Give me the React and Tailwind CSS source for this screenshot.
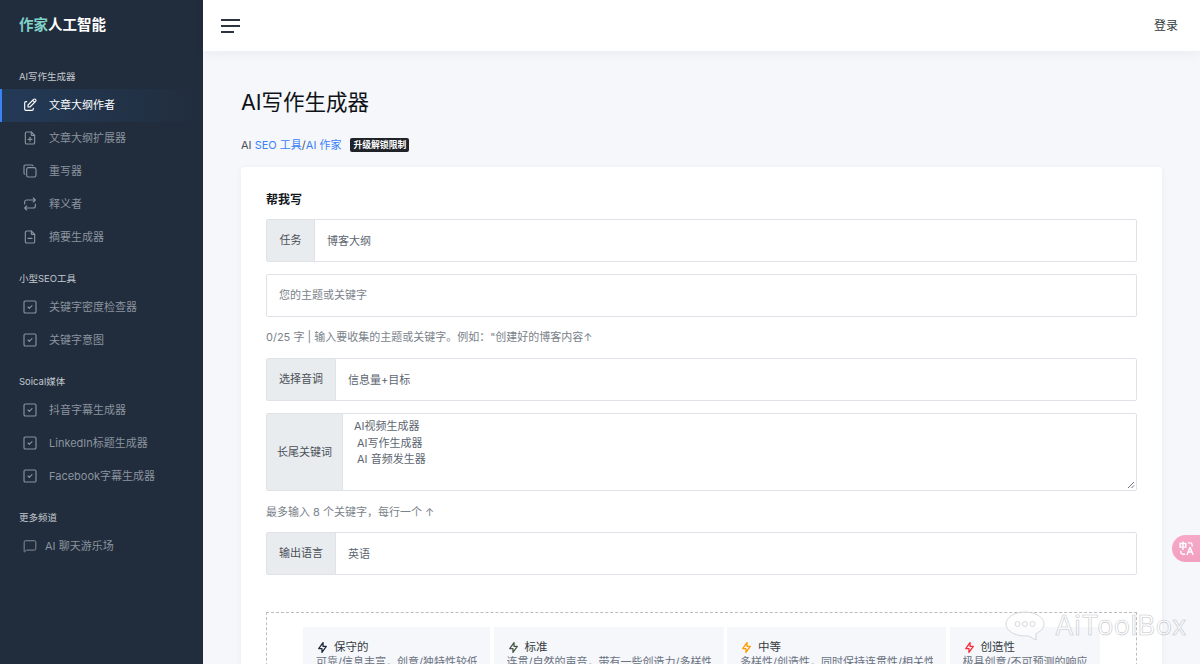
import { TbEdit, TbFilePlus, TbCopy, TbRepeat, TbFileMinus, TbSquareCheck, TbBolt } from "react-icons/tb";
import { MessageSquare } from "lucide-react";
import { RiTranslate } from "react-icons/ri";

const groups = [
  {
    title: "AI写作生成器",
    items: [
      { label: "文章大纲作者", icon: TbEdit, active: true },
      { label: "文章大纲扩展器", icon: TbFilePlus },
      { label: "重写器", icon: TbCopy },
      { label: "释义者", icon: TbRepeat },
      { label: "摘要生成器", icon: TbFileMinus },
    ],
  },
  {
    title: "小型SEO工具",
    items: [
      { label: "关键字密度检查器", icon: TbSquareCheck },
      { label: "关键字意图", icon: TbSquareCheck },
    ],
  },
  {
    title: "Soical媒体",
    items: [
      { label: "抖音字幕生成器", icon: TbSquareCheck },
      { label: "LinkedIn标题生成器", icon: TbSquareCheck },
      { label: "Facebook字幕生成器", icon: TbSquareCheck },
    ],
  },
];

const tones = [
  { name: "保守的", desc: "可靠/信息丰富，创意/独特性较低", color: "text-gray-800", w: "w-[187px]" },
  { name: "标准", desc: "连贯/自然的声音，带有一些创造力/多样性", color: "text-[#4b5a45]", w: "w-[230px]" },
  { name: "中等", desc: "多样性/创造性，同时保持连贯性/相关性", color: "text-amber-500", w: "w-[219px]" },
  { name: "创造性", desc: "极具创意/不可预测的响应", color: "text-red-500", w: "w-[150px]" },
];

function Field({ label, value, labelW = "w-[48px]" }) {
  return (
    <div className="flex h-[43px] border border-[#dfe3e8] rounded-[2px] bg-white">
      <div className={`${labelW} shrink-0 flex items-center justify-center bg-[#e9ecef] border-r border-[#dfe3e8] text-[#495057]`}>
        {label}
      </div>
      <div className="flex-1 flex items-center pl-[12px] pt-[1px] text-[#5c6670]">{value}</div>
    </div>
  );
}

export default function App() {
  return (
    <div
      className="flex h-screen overflow-hidden relative bg-[#f5f7fb] text-[11px]"
      style={{ fontFamily: 'Inter, "Noto Sans CJK SC", sans-serif' }}
    >
      {/* Sidebar */}
      <aside className="w-[203px] shrink-0 bg-[#212d3d] text-[#8b939d] pt-[15px]">
        <div className="pl-[19px] text-[14.5px] leading-[20px] font-bold text-white">
          <span className="text-[#7fd1c7]">作家</span>人工智能
        </div>
        <div className="mt-[28.5px]">
          {groups.map((g) => (
            <div key={g.title} className="mb-[12px]">
              <div className="pl-[19px] h-[25px] pt-[5px] text-[9.5px] leading-[16px] text-[#c3c8ce]">{g.title}</div>
              {g.items.map((it) => (
                <div
                  key={it.label}
                  className={`h-[33px] flex items-center gap-[11px] ${
                    it.active
                      ? "text-white border-l-2 border-[#3b82f6] pl-[20px] bg-gradient-to-r from-[#233a57] to-[#212d3d]"
                      : "pl-[22px]"
                  }`}
                >
                  <it.icon size={16} strokeWidth={1.7} />
                  <span>{it.label}</span>
                </div>
              ))}
            </div>
          ))}
          <div>
            <div className="pl-[19px] h-[25px] pt-[5px] text-[9.5px] leading-[16px] text-[#c3c8ce]">更多频道</div>
            <div className="h-[33px] flex items-center pl-[23px] gap-[8px]">
              <MessageSquare size={14} strokeWidth={1.6} />
              <span>AI 聊天游乐场</span>
            </div>
          </div>
        </div>
      </aside>

      {/* Main */}
      <div className="flex-1 min-w-0">
        <header className="h-[51px] bg-white shadow-[0_2px_12px_rgba(30,40,60,0.06)] flex items-center justify-between pl-[18px] pr-[22px]">
          <div className="flex flex-col gap-[4px]">
            <span className="block w-[19px] h-[2px] bg-[#2b3440]" />
            <span className="block w-[19px] h-[2px] bg-[#2b3440]" />
            <span className="block w-[13px] h-[2px] bg-[#2b3440]" />
          </div>
          <span className="text-[12px] text-[#343a40]">登录</span>
        </header>

        <main className="pl-[38px] pr-[38px] pt-[34px]">
          <h1 className="text-[21.5px] leading-[34px] text-[#0f1216]">AI写作生成器</h1>
          <div className="mt-[17px] h-[18px] flex items-center text-[#495057]">
            <span>
              AI <span className="text-[#3b82f6]">SEO 工具</span>/<span className="text-[#3b82f6]">AI 作家</span>
            </span>
            <span className="ml-[9px] px-[3px] h-[14px] leading-[14px] rounded-[2px] bg-[#1f2329] text-white text-[8.8px] font-bold">
              升级解锁限制
            </span>
          </div>

          <section className="mt-[13px] bg-white rounded-[3px] shadow-[0_1px_6px_rgba(30,40,60,0.05)] px-[25px] pt-[24px]">
            <h2 className="text-[12px] leading-[17px] font-bold text-[#14181d]">帮我写</h2>
            <div className="mt-[11px]">
              <Field label="任务" value="博客大纲" />
            </div>
            <div className="mt-[12px] h-[43px] border border-[#dfe3e8] rounded-[2px] flex items-center pl-[12px] text-[#7a828a]">
              您的主题或关键字
            </div>
            <p className="mt-[12px] h-[16px] leading-[16px] text-[#7a828a]">
              0/25 字 | 输入要收集的主题或关键字。例如："创建好的博客内容↑
            </p>
            <div className="mt-[13px]">
              <Field label="选择音调" value="信息量+目标" labelW="w-[69px]" />
            </div>
            <div className="mt-[12px] flex h-[78px] border border-[#dfe3e8] rounded-[2px] relative">
              <div className="w-[76px] shrink-0 flex items-center justify-center bg-[#e9ecef] border-r border-[#dfe3e8] text-[#495057]">
                长尾关键词
              </div>
              <div className="flex-1 pl-[11px] pt-[4px] leading-[16.5px] text-[#5c6670]">
                <div>AI视频生成器</div>
                <div className="pl-[3px]">AI写作生成器</div>
                <div className="pl-[3px]">AI 音频发生器</div>
              </div>
              <svg className="absolute right-[1px] bottom-[1px] text-[#6b7280]" width="8" height="8" viewBox="0 0 8 8">
                <path d="M7 1 1 7M7 4.5 4.5 7" stroke="currentColor" fill="none" />
              </svg>
            </div>
            <p className="mt-[13px] h-[16px] leading-[16px] text-[#7a828a]">最多输入 8 个关键字，每行一个 ↑</p>
            <div className="mt-[12px]">
              <Field label="输出语言" value="英语" labelW="w-[69px]" />
            </div>

            <div className="mt-[37px] border border-dashed border-[#b9bdc2] pt-[14px] pl-[36px] h-[120px] flex gap-[3.5px]">
              {tones.map((t) => (
                <div key={t.name} className={`${t.w} shrink-0 h-[90px] bg-[#f5f7fb] px-[13px] pt-[12px] overflow-hidden`}>
                  <div className="flex items-center gap-[5px] text-[#343a40] text-[11.5px] leading-[16px]">
                    <TbBolt size={13} strokeWidth={2.4} className={t.color} />
                    {t.name}
                  </div>
                  <div className="text-[#6b7280] whitespace-nowrap overflow-hidden leading-[14px]">{t.desc}</div>
                </div>
              ))}
            </div>
          </section>
        </main>
      </div>

      {/* Floating translate button */}
      <div className="absolute right-0 top-[535px] w-[28px] h-[27px] rounded-l-full bg-gradient-to-b from-[#f7a8c8] to-[#f2a0bf] flex items-center justify-center text-white">
        <RiTranslate size={17} />
      </div>

      {/* Watermark */}
      <div className="absolute left-[1005px] top-[611px] flex items-center gap-[10px] pointer-events-none">
        <svg width="40" height="30" viewBox="0 0 40 30" fill="rgba(255,255,255,0.55)" stroke="#c4c7cb" strokeWidth="0.7">
          <path d="M20 1C9.5 1 1 6.3 1 13s8.5 12 19 12c1 0 2 0 3-.2L31 29v-6.5c4.800-2.100 8-5.500 8-9.500C39 6.300 30.500 1 20 1z" />
          <circle cx="12.500" cy="13" r="2.500" />
          <circle cx="20" cy="13" r="2.500" />
          <circle cx="27.500" cy="13" r="2.500" />
        </svg>
        <span
          className="text-[27px] leading-[30px] tracking-[0.5px] text-white/60"
          style={{ WebkitTextStroke: "0.6px #c4c7cb" }}
        >
          AiToolBox
        </span>
      </div>
    </div>
  );
}
